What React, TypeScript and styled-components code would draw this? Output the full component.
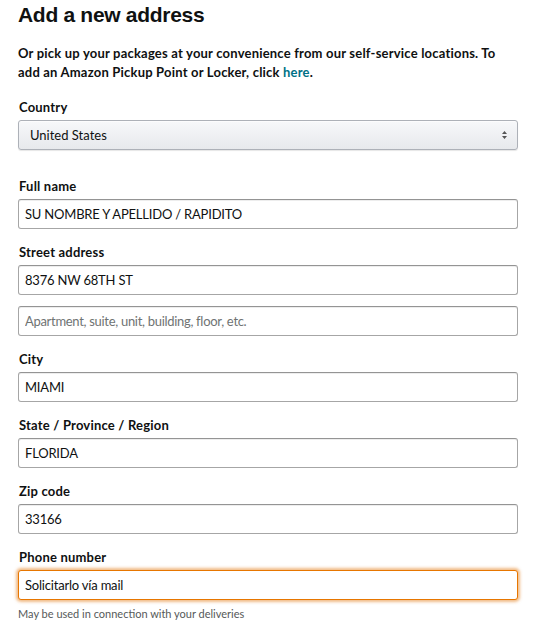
import styled, { createGlobalStyle } from 'styled-components';

const GlobalStyle = createGlobalStyle`
  html, body {
    margin: 0;
    padding: 0;
    background: #fff;
  }
  body {
    font-family: Lato, "Liberation Sans", Arial, sans-serif;
    color: #0f1111;
  }
`;

const Page = styled.div`
  width: 500px;
  padding: 0 18px;
`;

const Title = styled.h1`
  margin: 0;
  padding-top: 1px;
  font-family: "Liberation Sans", Arial, sans-serif;
  font-size: 21px;
  line-height: 28px;
  font-weight: 700;
  letter-spacing: -0.3px;
`;

const Intro = styled.p`
  margin: 15px 0 0;
  font-size: 13px;
  line-height: 19px;
  font-weight: 700;
  letter-spacing: 0.2px;

  & > a {
    color: #007185;
    text-decoration: none;
  }
`;

const Field = styled.div<{ $gap?: number }>`
  display: flex;
  flex-direction: column;
  margin-top: ${(p) => p.$gap ?? 14}px;
`;

const Label = styled.label`
  padding-left: 1px;
  font-size: 13px;
  line-height: 19px;
  font-weight: 700;
  letter-spacing: 0.2px;
  margin-bottom: 3px;
`;

const Input = styled.input<{ $focus?: boolean }>`
  box-sizing: border-box;
  width: 100%;
  height: 30px;
  margin: 0;
  padding: 0 6px;
  font-family: Lato, "Liberation Sans", Arial, sans-serif;
  font-size: 13px;
  letter-spacing: -0.2px;
  color: #0f1111;
  background: #fff;
  border: 1px solid ${(p) => (p.$focus ? '#e77600' : '#a6a6a6')};
  border-top-color: ${(p) => (p.$focus ? '#e77600' : '#949494')};
  border-radius: 3px;
  box-shadow: ${(p) =>
    p.$focus
      ? '0 0 3px 2px rgba(228, 121, 17, 0.5)'
      : '0 1px 0 rgba(255, 255, 255, 0.5), 0 1px 0 rgba(0, 0, 0, 0.07) inset'};
  outline: none;

  &::placeholder {
    color: #6f7373;
    letter-spacing: -0.3px;
  }
`;

const Extra = styled(Input)`
  margin-top: 11px;
`;

const Select = styled.div`
  box-sizing: border-box;
  display: flex;
  align-items: center;
  justify-content: space-between;
  height: 30px;
  padding: 0 10px 0 11px;
  font-size: 13px;
  background: linear-gradient(to bottom, #f7f8fa, #e7e9ec);
  border: 1px solid #adb1b8;
  border-radius: 3px;
  box-shadow: 0 1px 0 rgba(255, 255, 255, 0.6) inset, 0 1px 1px rgba(0, 0, 0, 0.1);
`;

const Hint = styled.div`
  margin-top: 6px;
  font-size: 11px;
  line-height: 16px;
  color: #565959;
`;

function Arrows() {
  return (
    <svg width="5" height="8" viewBox="0 0 5 8">
      <path d="M2.5 0 L5 3 H0 Z M0 5 H5 L2.5 8 Z" fill="#555" />
    </svg>
  );
}

export default function App() {
  return (
    <Page>
      <GlobalStyle />
      <Title>Add a new address</Title>
      <Intro>
        Or pick up your packages at your convenience from our self-service locations. To
        <br />
        add an Amazon Pickup Point or Locker, click <a href="#">here</a>.
      </Intro>

      <Field $gap={16}>
        <Label>Country</Label>
        <Select>
          <span>United States</span>
          <Arrows />
        </Select>
      </Field>

      <Field $gap={27}>
        <Label>Full name</Label>
        <Input defaultValue="SU NOMBRE Y APELLIDO / RAPIDITO" />
      </Field>

      <Field>
        <Label>Street address</Label>
        <Input defaultValue="8376 NW 68TH ST" />
        <Extra placeholder="Apartment, suite, unit, building, floor, etc." />
      </Field>

      <Field $gap={14}>
        <Label>City</Label>
        <Input defaultValue="MIAMI" />
      </Field>

      <Field>
        <Label>State / Province / Region</Label>
        <Input defaultValue="FLORIDA" />
      </Field>

      <Field>
        <Label>Zip code</Label>
        <Input defaultValue="33166" />
      </Field>

      <Field>
        <Label>Phone number</Label>
        <Input $focus defaultValue="Solicitarlo vía mail" />
      </Field>

      <Hint>May be used in connection with your deliveries</Hint>
    </Page>
  );
}
